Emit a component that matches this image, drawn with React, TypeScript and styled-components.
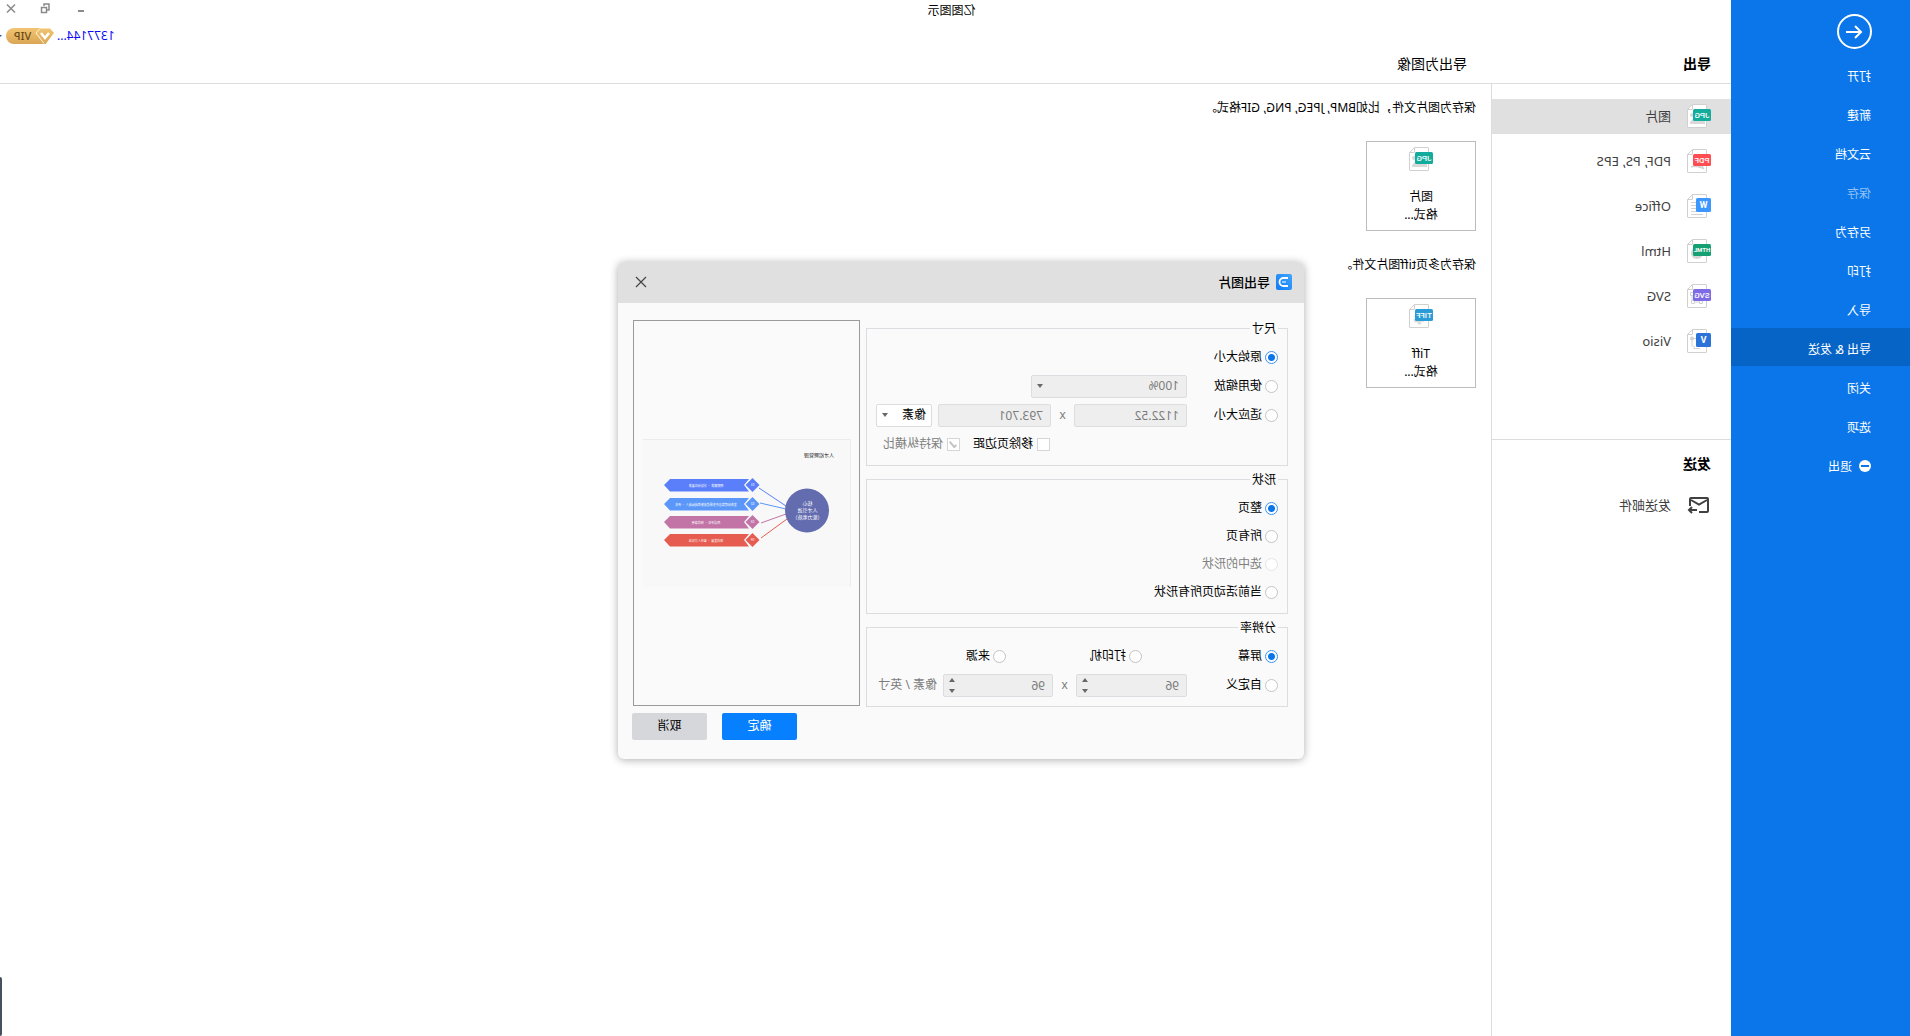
import React, { ReactNode, useState } from 'react';
import styled, { createGlobalStyle } from 'styled-components';

const GlobalStyle = createGlobalStyle`
  *, *::before, *::after { box-sizing: border-box; }
  body { margin: 0; overflow: hidden; background: #fff; font-kerning: none; }
  body, button, input, select {
    font-family: "Noto Sans", "Noto Sans CJK SC", sans-serif;
    font-size: 12px;
    line-height: 18px;
    color: #000;
  }
  button { border: 0; padding: 0; background: none; cursor: pointer; }
  h1, h2, p, fieldset { margin: 0; }
`;

/* The whole window is flipped left to right. */
const Window = styled.div`
  position: relative;
  display: flex;
  height: 100vh;
  overflow: hidden;
  background: #fff;
  transform: scaleX(-1);
`;

/* ---------- blue sidebar ---------- */
const Sidebar = styled.nav`
  flex: none;
  width: 179px;
  padding-top: 14px;
  background: #0a76ea;
`;
const BackButton = styled.button`
  display: block;
  width: 35px;
  height: 35px;
  margin: 0 0 6px 38px;
`;
const Menu = styled.div`
  display: flex;
  flex-direction: column;
  gap: 1px;
`;
const MenuItem = styled.button<{ $active?: boolean; $dim?: boolean }>`
  display: flex;
  align-items: center;
  gap: 7px;
  height: 38px;
  padding: 6px 0 0 39px;
  text-align: left;
  white-space: pre;
  color: ${p => (p.$dim ? '#8fc1f6' : '#fff')};
  background: ${p => (p.$active ? '#0764c7' : 'transparent')};
`;

/* ---------- main area ---------- */
const Main = styled.main`
  flex: 1;
  min-width: 0;
  display: flex;
  flex-direction: column;
`;
const TitleBar = styled.header`
  display: flex;
  align-items: center;
  height: 22px;
`;
const AppTitle = styled.span`
  flex: 1;
  padding-right: 72px;
  text-align: center;
`;
const WindowControls = styled.div`
  display: flex;
  justify-content: flex-end;
  gap: 21px;
  width: 100px;
  padding: 0 4px 4px 0;
`;
const ControlButton = styled.button`
  display: flex;
  align-items: center;
  justify-content: center;
  width: 14px;
  height: 14px;
`;
const AccountBar = styled.div`
  display: flex;
  align-items: flex-start;
  justify-content: flex-end;
  height: 22px;
  padding-top: 6px;
`;
const AccountButton = styled.button`
  display: flex;
  align-items: center;
  gap: 3px;
  height: 16px;
  color: #0a0af5;
`;
const HeadRow = styled.div`
  display: flex;
  align-items: center;
  height: 40px;
  border-bottom: 1px solid #dcdcdc;
`;
const Heading = styled.h2<{ $light?: boolean }>`
  width: ${p => (p.$light ? 'auto' : '264px')};
  padding-left: ${p => (p.$light ? '0' : '20px')};
  font-size: 14px;
  line-height: 18px;
  font-weight: ${p => (p.$light ? 400 : 700)};
`;
const Columns = styled.div`
  flex: 1;
  display: flex;
`;
const TypeColumn = styled.div`
  flex: none;
  width: 240px;
  border-right: 1px solid #dcdcdc;
`;
const TypeList = styled.div`
  display: flex;
  flex-direction: column;
  gap: 10px;
  padding: 15px 0 80px;
  border-bottom: 1px solid #dcdcdc;
`;
const TypeItem = styled.button<{ $active?: boolean }>`
  display: flex;
  align-items: center;
  gap: 16px;
  width: 100%;
  height: 35px;
  padding: 0 0 1px 20px;
  font-size: 13px;
  color: #404040;
  background: ${p => (p.$active ? '#e0e0e0' : 'transparent')};
`;
const SendBlock = styled.div`
  display: flex;
  flex-direction: column;
  gap: 15px;
  padding-top: 15px;
`;
const Content = styled.div`
  flex: 1;
  display: flex;
  flex-direction: column;
  gap: 25px;
  padding: 15px;
`;
const ExportSection = styled.section`
  display: flex;
  flex-direction: column;
  align-items: flex-start;
  gap: 24px;
`;
const ExportCard = styled.button`
  display: flex;
  flex-direction: column;
  align-items: center;
  gap: 17px;
  width: 110px;
  height: 90px;
  padding-top: 5px;
  border: 1px solid #bcbcbc;
  background: #fff;
`;
const CardLabel = styled.span`
  width: 36px;
  white-space: nowrap;
  display: flex;
  flex-direction: column;
  align-items: center;
`;

/* ---------- dialog ---------- */
const Overlay = styled.div`
  position: absolute;
  inset: 0;
  display: flex;
  align-items: center;
  justify-content: center;
  padding: 0 12px 16px 0;
`;
const Dialog = styled.div`
  width: 686px;
  border-radius: 6px;
  background: #fafafa;
  box-shadow: 0 1px 8px rgba(0, 0, 0, 0.32);
  overflow: hidden;
`;
const DialogHeader = styled.div`
  display: flex;
  align-items: center;
  gap: 6px;
  height: 41px;
  padding: 0 16px 0 12px;
  background: #e0e0e0;
`;
const DialogTitle = styled.h1`
  flex: 1;
  font-size: 13px;
  line-height: 18px;
  font-weight: 500;
`;
const DialogBody = styled.form`
  display: flex;
  gap: 6px;
  padding: 17px 14px 19px 16px;
`;
const Options = styled.div`
  flex: 1;
  display: flex;
  flex-direction: column;
  gap: 5px;
  padding-bottom: 33px;
`;
const Group = styled.fieldset<{ $gap: number }>`
  min-width: 0;
  padding: 8px 9px 9px;
  border: 1px solid #dcdde0;
  display: flex;
  flex-direction: column;
  gap: ${p => p.$gap}px;
`;
const Legend = styled.legend`
  padding: 0 2px;
`;
const Row = styled.div`
  display: flex;
  align-items: center;
  height: 23px;
`;
const Choice = styled.label<{ $width?: number; $muted?: boolean }>`
  display: flex;
  align-items: center;
  gap: 3px;
  width: ${p => (p.$width ? p.$width + 'px' : 'auto')};
  white-space: nowrap;
  color: ${p => (p.$muted ? '#808080' : '#000')};
`;
const Radio = styled.input.attrs({ type: 'radio' })`
  appearance: none;
  flex: none;
  width: 13px;
  height: 13px;
  margin: 0;
  border: 1px solid #c4c4c4;
  border-radius: 50%;
  background: #fff;
  &:checked {
    border-color: #3d92f0;
    background: radial-gradient(circle, #0a76ea 0 2px, #0a76ea 3px, #fff 4px);
  }
  &:disabled { border-color: #e4e4e4; }
`;
const Checkbox = styled.input.attrs({ type: 'checkbox' })`
  appearance: none;
  flex: none;
  display: grid;
  place-items: center;
  width: 13px;
  height: 13px;
  margin: 0;
  border: 1px solid #d6d6d6;
  background: #fff;
  &:checked::after {
    content: '';
    width: 4px;
    height: 8px;
    border: solid #c4c4c4;
    border-width: 0 2px 2px 0;
    transform: rotate(40deg);
  }
`;
const CheckRow = styled(Row)`
  gap: 13px;
  padding-left: 228px;
`;
const CheckChoice = styled(Choice)`
  gap: 4px;
`;
const Field = styled.span<{ $width: number }>`
  position: relative;
  display: flex;
  flex: none;
  width: ${p => p.$width}px;
  height: 23px;
`;
const TextInput = styled.input`
  width: 100%;
  height: 100%;
  padding: 0 7px;
  border: 1px solid #dcdde0;
  border-radius: 2px;
  background: #eee;
  color: #7c7c7c;
  appearance: textfield;
`;
const Select = styled.select`
  appearance: none;
  width: 100%;
  height: 100%;
  padding: 0 5px;
  border: 1px solid #dcdde0;
  border-radius: 2px;
  background: #fff;
  color: #000;
  opacity: 1;
  &:disabled { padding: 0 7px; background: #eee; color: #7c7c7c; }
`;
const FieldMark = styled.svg`
  position: absolute;
  right: 6px;
  top: 0;
  pointer-events: none;
`;
const Times = styled.span`
  flex: none;
  width: 23px;
  text-align: center;
  color: #7c7c7c;
`;
const Unit = styled.span`
  padding-left: 6px;
  color: #7c7c7c;
  white-space: nowrap;
`;
const SelectGap = styled.span`
  width: 6px;
`;
const PreviewColumn = styled.div`
  flex: none;
  width: 228px;
  display: flex;
  flex-direction: column;
  gap: 7px;
`;
const Preview = styled.div`
  flex: 1;
  display: flex;
  align-items: center;
  margin-right: 1px;
  padding-left: 8px;
  border: 1px solid #9a9a9a;
`;
const Actions = styled.div`
  display: flex;
  justify-content: flex-end;
  gap: 15px;
`;
const ActionButton = styled.button<{ $primary?: boolean }>`
  width: 75px;
  height: 27px;
  border-radius: 2px;
  color: ${p => (p.$primary ? '#fff' : '#000')};
  background: ${p => (p.$primary ? '#0780ff' : '#d6d7db')};
`;
const EdgeHandle = styled.div`
  position: absolute;
  right: 0;
  bottom: 0;
  width: 2px;
  height: 59px;
  background: #45515f;
  border-radius: 2px 0 0 2px;
`;

/* ---------- icons ---------- */
type FileKind = 'JPG' | 'PDF' | 'W' | 'HTML' | 'SVG' | 'V' | 'TIFF';

const badgeColor: Record<FileKind, string> = {
  JPG: '#12ab9c',
  PDF: '#ff4d52',
  W: '#3c96ff',
  HTML: '#14a073',
  SVG: '#7d6be6',
  V: '#2b72d9',
  TIFF: '#2b9bd6',
};

const fileMark: Record<FileKind, ReactNode> = {
  JPG: <><path d="M6 20v-3l5-4 4 3 3-1 3 3v2z" fill="#d9d9d9" /><circle cx="19" cy="11" r="2" fill="#d9d9d9" /></>,
  PDF: <path d="M7 20c2-4 4-6 5-9 1 4 4 6 8 7-4-1-9 0-13 2z" fill="#d9d9d9" stroke="#d0d0d0" />,
  W: <path d="M8 8.500h12M8 11.500h12M8 14.500h12M8 17.500h12M8 20.500h12" stroke="#d2d2d2" />,
  HTML: <circle cx="14" cy="14" r="6" fill="#d6d6d6" />,
  SVG: <path d="M8.500 8.500h3v3h-3zM17.500 8.500h3v3h-3zM8.500 16.500h3v3h-3zM16.500 16.500h3v3h-3zM10 12v4M19 12v4M12 18h4" fill="none" stroke="#d2d2d2" />,
  V: <><circle cx="19" cy="9.500" r="2" fill="#d2d2d2" /><path d="M13 9.500h6v8M11 19.500h6v-3" fill="none" stroke="#d2d2d2" /></>,
  TIFF: <circle cx="14" cy="15" r="4" fill="#dcdcdc" stroke="#dcdcdc" strokeWidth="3" strokeDasharray="3 2" />,
};

const badgeTextSize: Record<FileKind, number> = {
  JPG: 8, PDF: 8, W: 9, HTML: 6, SVG: 8, V: 9, TIFF: 8,
};

function FileIcon({ kind }: { kind: FileKind }) {
  const short = kind.length === 1;
  return (
    <svg width="24" height="24" viewBox="0 0 24 24" aria-hidden="true">
      <path d="M5 .5h13.500l5 5V23a.5.5 0 0 1-.5.5H5a.5.5 0 0 1-.5-.5V1a.5.5 0 0 1 .5-.5z" fill="#fff" stroke="#d0d0d0" />
      <path d="M18.500.5V5a.5.5 0 0 0 .5.5h4.500" fill="none" stroke="#d0d0d0" />
      {fileMark[kind]}
      <rect x="0" y={short ? 4 : 5} width={short ? 15 : 18} height={short ? 14 : 12} rx="1.500" fill={badgeColor[kind]} />
      <text
        x={short ? 7.5 : 9}
        y={kind === 'HTML' ? 13 : 14}
        textAnchor="middle"
        fill="#fff"
        fontFamily='Roboto, "Noto Sans", sans-serif'
        fontWeight={short || kind === 'HTML' ? 700 : 500}
        fontSize={badgeTextSize[kind]}
      >
        {kind}
      </text>
    </svg>
  );
}

function BackIcon() {
  return (
    <svg width="35" height="35" viewBox="0 0 35 35" fill="none" stroke="#fff" strokeWidth="2" aria-hidden="true">
      <circle cx="17.500" cy="17.500" r="16.500" />
      <path d="M26 18H11M17 12l-6 6 6 6" />
    </svg>
  );
}

function ExitIcon() {
  return (
    <svg width="12" height="14" viewBox="0 0 12 14" aria-hidden="true">
      <circle cx="6" cy="6" r="6" fill="#fff" />
      <rect x="2" y="5" width="8" height="2" fill="#0a76ea" />
    </svg>
  );
}

function MailIcon() {
  return (
    <svg width="24" height="18" viewBox="0 0 24 18" fill="none" stroke="#404040" strokeWidth="2" aria-hidden="true">
      <path d="M12 16H4a1 1 0 0 1-1-1V3a1 1 0 0 1 1-1h16a1 1 0 0 1 1 1v7" />
      <path d="M4 4l8 4.500L20 4" />
      <path d="M14 14h8M19 11l3 3-3 3" />
    </svg>
  );
}

function VipBadge() {
  return (
    <svg width="48" height="16" viewBox="0 0 48 16" role="img" aria-label="VIP">
      <defs>
        <linearGradient id="gold" x1="0" y1="0" x2="0" y2="1">
          <stop offset="0" stopColor="#f2c572" />
          <stop offset="1" stopColor="#d9a655" />
        </linearGradient>
      </defs>
      <path d="M14 0h26a8 8 0 0 1 0 16H9z" fill="url(#gold)" />
      <path d="M4 .500h10l4 4.500-8 10.500a1 1 0 0 1-2 0L0 5z" fill="url(#gold)" />
      <path d="M14 .5l4 4.500-8 10.500" fill="none" stroke="#fff3dc" />
      <path d="M5 5l4 5 4-5" fill="none" stroke="#fff" strokeWidth="2.500" />
      <text x="31.500" y="12" textAnchor="middle" fontSize="11" fill="#6e4a14" fontFamily='"Noto Sans", sans-serif' fontWeight="500">VIP</text>
    </svg>
  );
}

function LogoIcon() {
  return (
    <svg width="16" height="16" viewBox="0 0 16 16" fill="none" aria-hidden="true">
      <defs>
        <linearGradient id="logo" x1="0" y1="0" x2="1" y2="1">
          <stop offset="0" stopColor="#42a5ff" />
          <stop offset="1" stopColor="#0f7bf5" />
        </linearGradient>
      </defs>
      <rect width="16" height="16" rx="2" fill="url(#logo)" />
      <path d="M4 4h4.500a4 4 0 0 1 0 8H4" stroke="#fff" strokeWidth="1.800" />
      <path d="M6 8h4" stroke="#bfe0ff" strokeWidth="1.500" />
    </svg>
  );
}

function Caret() {
  return (
    <FieldMark width="6" height="23" viewBox="0 0 6 23" aria-hidden="true">
      <path d="M0 9h6L3 13z" fill="#686868" />
    </FieldMark>
  );
}

function SpinMarks() {
  return (
    <FieldMark width="6" height="23" viewBox="0 0 6 23" aria-hidden="true">
      <path d="M0 8h6L3 4zM0 15h6L3 19z" fill="#686868" />
    </FieldMark>
  );
}

const branches = [
  { y: 46, color: '#5b7ffb', label: '明确需求 · 分析岗位要求', no: '01', line: 'M65 67L92 49' },
  { y: 65, color: '#5a97f9', label: '发布招聘信息并多渠道收集筛选候选人 · 评估', no: '02', line: 'M65 70L91 64' },
  { y: 83, color: '#c274a7', label: '面试评估 · 择优录用', no: '03', line: 'M65 75L90 84' },
  { y: 101, color: '#e65c50', label: '培训发展 · 留住人才队伍', no: '04', line: 'M64 80L90 99' },
];

function PagePreview() {
  return (
    <svg width="208" height="148" viewBox="0 0 208 148" fontFamily='"Noto Sans CJK SC", sans-serif' role="img" aria-label="页面预览">
      <rect width="208" height="148" fill="#f8f8f8" />
      <path d="M.5 148V.5H208" fill="none" stroke="#ececec" />
      <text x="17" y="18" fontSize="5" fill="#222">人才招聘管理</text>
      {branches.map(b => (
        <g key={b.no}>
          <path d={b.line} stroke={b.color} />
          <path d={`M102 ${b.y - 6}H181l6 6-6 6.500H102l5-6.500z`} fill={b.color} />
          <path d={`M98.500 ${b.y - 7}l7 7-7 7-7-7z`} fill={b.color} />
          <text x="98.500" y={b.y + 1} fontSize="3" fill="#fff" textAnchor="middle">{b.no}</text>
          <text x="145" y={b.y + 2} fontSize="3" fill="#fff" textAnchor="middle">{b.label}</text>
        </g>
      ))}
      <circle cx="44" cy="71.500" r="22" fill="#646cb0" />
      <g fontSize="5" fill="#fff" textAnchor="middle">
        <text x="43.500" y="66">核心</text>
        <text x="43.500" y="73">人才引进</text>
        <text x="43.500" y="80">（能力素质）</text>
      </g>
    </svg>
  );
}

/* ---------- data ---------- */
const menuItems = ['打开', '新建', '云文档', '保存', '另存为', '打印', '导入', '导出 & 发送', '关闭', '选项'];

const exportTypes: { kind: FileKind; label: string }[] = [
  { kind: 'JPG', label: '图片' },
  { kind: 'PDF', label: 'PDF, PS, EPS' },
  { kind: 'W', label: 'Office' },
  { kind: 'HTML', label: 'Html' },
  { kind: 'SVG', label: 'SVG' },
  { kind: 'V', label: 'Visio' },
];

const imageExports: { kind: FileKind; note: string; label: string }[] = [
  { kind: 'JPG', note: '保存为图片文件，比如BMP, JPEG, PNG, GIF格式。', label: '图片' },
  { kind: 'TIFF', note: '保存为多页tiff图片文件。', label: 'Tiff' },
];

function ExportDialog() {
  const [size, setSize] = useState('original');
  const [shape, setShape] = useState('page');
  const [dpi, setDpi] = useState('screen');
  const [trim, setTrim] = useState(false);

  const sizeRadio = (v: string, text: string) => (
    <Choice $width={91}><Radio name="size" checked={size === v} onChange={() => setSize(v)} />{text}</Choice>
  );
  const shapeRadio = (v: string, text: string, disabled = false) => (
    <Row>
      <Choice $muted={disabled}>
        <Radio name="shape" disabled={disabled} checked={shape === v} onChange={() => setShape(v)} />{text}
      </Choice>
    </Row>
  );
  const dpiRadio = (v: string, text: string, width: number) => (
    <Choice $width={width}><Radio name="dpi" checked={dpi === v} onChange={() => setDpi(v)} />{text}</Choice>
  );

  return (
    <Overlay>
      <Dialog role="dialog" aria-labelledby="dialog-title">
        <DialogHeader>
          <LogoIcon />
          <DialogTitle id="dialog-title">导出图片</DialogTitle>
          <ControlButton aria-label="关闭">
            <svg width="12" height="12" viewBox="0 0 12 12" stroke="#444" strokeWidth="1.200"><path d="M1 1l10 10M11 1L1 11" /></svg>
          </ControlButton>
        </DialogHeader>
        <DialogBody onSubmit={e => e.preventDefault()}>
          <Options>
            <Group $gap={6}>
              <Legend>尺寸</Legend>
              <Row>{sizeRadio('original', '原始大小')}</Row>
              <Row>
                {sizeRadio('scale', '使用缩放')}
                <Field $width={156}>
                  <Select aria-label="缩放比例" disabled><option>100%</option></Select>
                  <Caret />
                </Field>
              </Row>
              <Row>
                {sizeRadio('fit', '适应大小')}
                <Field $width={113}><TextInput aria-label="宽度" disabled defaultValue="1122.52" /></Field>
                <Times>x</Times>
                <Field $width={113}><TextInput aria-label="高度" disabled defaultValue="793.701" /></Field>
                <SelectGap />
                <Field $width={56}>
                  <Select aria-label="单位"><option>像素</option><option>英寸</option></Select>
                  <Caret />
                </Field>
              </Row>
              <CheckRow>
                <CheckChoice><Checkbox checked={trim} onChange={() => setTrim(!trim)} />移除页边距</CheckChoice>
                <CheckChoice $muted><Checkbox disabled checked readOnly />保持纵横比</CheckChoice>
              </CheckRow>
            </Group>
            <Group $gap={5}>
              <Legend>形状</Legend>
              {shapeRadio('page', '整页')}
              {shapeRadio('all', '所有页')}
              {shapeRadio('selected', '选中的形状', true)}
              {shapeRadio('active', '当前活动页所有形状')}
            </Group>
            <Group $gap={6}>
              <Legend>分辨率</Legend>
              <Row>
                {dpiRadio('screen', '屏幕', 136)}
                {dpiRadio('printer', '打印机', 136)}
                {dpiRadio('source', '来源', 60)}
              </Row>
              <Row>
                {dpiRadio('custom', '自定义', 91)}
                <Field $width={111}><TextInput aria-label="水平分辨率" disabled defaultValue="96" /><SpinMarks /></Field>
                <Times>x</Times>
                <Field $width={110}><TextInput aria-label="垂直分辨率" disabled defaultValue="96" /><SpinMarks /></Field>
                <Unit>像素 / 英寸</Unit>
              </Row>
            </Group>
          </Options>
          <PreviewColumn>
            <Preview><PagePreview /></Preview>
            <Actions>
              <ActionButton type="submit" $primary>确定</ActionButton>
              <ActionButton type="button">取消</ActionButton>
            </Actions>
          </PreviewColumn>
        </DialogBody>
      </Dialog>
    </Overlay>
  );
}

export default function App() {
  return (
    <>
      <GlobalStyle />
      <Window>
        <Sidebar>
          <BackButton aria-label="返回"><BackIcon /></BackButton>
          <Menu>
            {menuItems.map(item => (
              <MenuItem key={item} $active={item.startsWith('导出')} $dim={item === '保存'}>{item}</MenuItem>
            ))}
            <MenuItem><ExitIcon />退出</MenuItem>
          </Menu>
        </Sidebar>
        <Main>
          <TitleBar>
            <AppTitle>亿图图示</AppTitle>
            <WindowControls>
              <ControlButton aria-label="最小化">
                <svg width="14" height="14" viewBox="0 0 14 14"><rect x="4" y="8" width="6" height="2" fill="#8a8a8a" /></svg>
              </ControlButton>
              <ControlButton aria-label="还原">
                <svg width="14" height="14" viewBox="0 0 14 14" fill="none" stroke="#8a8a8a" strokeWidth="1.500">
                  <path d="M6 8H4V2h5v2M6.500 5.500h5v5h-5z" />
                </svg>
              </ControlButton>
              <ControlButton aria-label="关闭">
                <svg width="14" height="14" viewBox="0 0 14 14" stroke="#8a8a8a" strokeWidth="1.500"><path d="M3 2.500l8 8M11 2.500l-8 8" /></svg>
              </ControlButton>
            </WindowControls>
          </TitleBar>
          <AccountBar>
            <AccountButton>
              1377144...
              <VipBadge />
              <svg width="3" height="16" viewBox="0 0 3 16" aria-hidden="true"><path d="M1 7h6l-3 3z" fill="#1a4f9c" /></svg>
            </AccountButton>
          </AccountBar>
          <HeadRow>
            <Heading>导出</Heading>
            <Heading $light>导出为图像</Heading>
          </HeadRow>
          <Columns>
            <TypeColumn>
              <TypeList>
                {exportTypes.map(t => (
                  <TypeItem key={t.kind} $active={t.kind === 'JPG'}><FileIcon kind={t.kind} />{t.label}</TypeItem>
                ))}
              </TypeList>
              <SendBlock>
                <Heading>发送</Heading>
                <TypeItem><MailIcon />发送邮件</TypeItem>
              </SendBlock>
            </TypeColumn>
            <Content>
              {imageExports.map(x => (
                <ExportSection key={x.kind}>
                  <p>{x.note}</p>
                  <ExportCard>
                    <FileIcon kind={x.kind} />
                    <CardLabel><span>{x.label}</span><span>格式...</span></CardLabel>
                  </ExportCard>
                </ExportSection>
              ))}
            </Content>
          </Columns>
        </Main>
        <ExportDialog />
        <EdgeHandle />
      </Window>
    </>
  );
}
